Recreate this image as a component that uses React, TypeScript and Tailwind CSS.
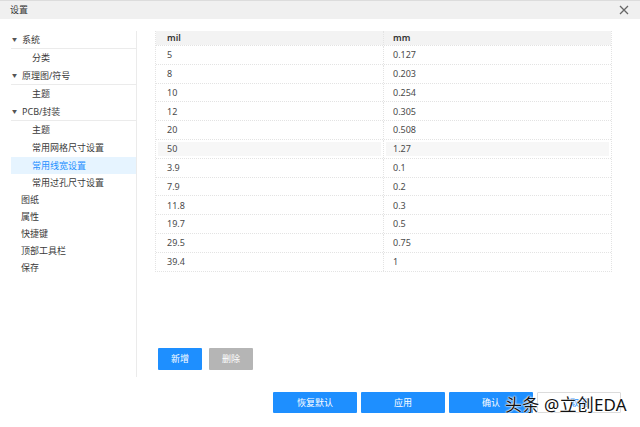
import React from 'react';

const rows = [
  ['5', '0.127'],
  ['8', '0.203'],
  ['10', '0.254'],
  ['12', '0.305'],
  ['20', '0.508'],
  ['50', '1.27'],
  ['3.9', '0.1'],
  ['7.9', '0.2'],
  ['11.8', '0.3'],
  ['19.7', '0.5'],
  ['29.5', '0.75'],
  ['39.4', '1'],
];

type TreeItem = { label: string; level: 0 | 1 | 2; h: string; active?: boolean; line?: boolean };

const tree: TreeItem[] = [
  { label: '系统', level: 0, h: 'h-[18px]', line: true },
  { label: '分类', level: 1, h: 'h-[18px]' },
  { label: '原理图/符号', level: 0, h: 'h-[18px]', line: true },
  { label: '主题', level: 1, h: 'h-[18px]' },
  { label: 'PCB/封装', level: 0, h: 'h-[18px]', line: true },
  { label: '主题', level: 1, h: 'h-[18px]' },
  { label: '常用网格尺寸设置', level: 1, h: 'h-[18px]' },
  { label: '常用线宽设置', level: 1, h: 'h-[17px]', active: true },
  { label: '常用过孔尺寸设置', level: 1, h: 'h-[17px]' },
  { label: '图纸', level: 2, h: 'h-[17px]' },
  { label: '属性', level: 2, h: 'h-[17px]' },
  { label: '快捷键', level: 2, h: 'h-[17px]' },
  { label: '顶部工具栏', level: 2, h: 'h-[17px]' },
  { label: '保存', level: 2, h: 'h-[17px]' },
];

function TreeRow({ item }: { item: TreeItem }) {
  const pad = item.level === 0 ? 'pl-[1px]' : item.level === 1 ? 'pl-[21px]' : 'pl-[10px]';
  return (
    <div
      className={`${item.h} ${pad} flex items-center ${item.line ? 'border-b border-[#ebebeb]' : ''} ${
        item.active ? 'bg-[#e6f4ff] text-[#1e8fff]' : 'text-[#3a3a3a]'
      }`}
    >
      {item.level === 0 && <span className="text-[5px] text-[#555] w-[10px] leading-none">▼</span>}
      <span>{item.label}</span>
    </div>
  );
}

export default function App() {
  return (
    <div
      className="w-[640px] h-[427px] bg-white flex flex-col relative overflow-hidden text-[9px]"
      style={{ fontFamily: '"Noto Sans", "Noto Sans CJK SC", sans-serif' }}
    >
      <div className="h-[19px] bg-[#f0f0f0] border-t border-[#dcdcdc] flex items-center justify-between pl-[10px] pr-[11px]">
        <span className="text-[#333]">设置</span>
        <svg width="10" height="10" viewBox="0 0 10 10">
          <path d="M1 1 L9 9 M9 1 L1 9" stroke="#666" strokeWidth="1.3" />
        </svg>
      </div>

      <div className="flex h-[366px]">
        <div className="w-[137px] pt-[12px] pl-[11px]">
          <div className="h-[346px] border-r border-[#ebebeb]">
            {tree.map((item, i) => (
              <TreeRow key={i} item={item} />
            ))}
          </div>
        </div>

        <div className="pl-[18px] pt-[12px] flex flex-col">
          <div className="h-[346px] flex flex-col justify-between">
            <div className="w-[457px] border-l border-r border-b border-dotted border-[#e3e3e3]">
              <div className="flex h-[14px] bg-[#f3f3f3] font-semibold text-[#333]">
                <div className="w-[228px] pl-[11px] flex items-center border-r border-dotted border-[#e3e3e3]">mil</div>
                <div className="flex-1 pl-[9px] flex items-center">mm</div>
              </div>
              {rows.map(([a, b], i) => (
                <div key={i} className="flex h-[18.8px] border-t border-dotted border-[#e3e3e3] text-[#4a4a4a]">
                  <div className="w-[228px] border-r border-dotted border-[#e3e3e3] p-[2px]">
                    <div className={`h-full pl-[9px] flex items-center ${i === 5 ? 'bg-[#f7f7f7]' : ''}`}>{a}</div>
                  </div>
                  <div className="flex-1 p-[2px]">
                    <div className={`h-full pl-[7px] flex items-center ${i === 5 ? 'bg-[#f7f7f7]' : ''}`}>{b}</div>
                  </div>
                </div>
              ))}
            </div>

            <div className="flex gap-[7px] pl-[3px] mb-[7px]">
              <button className="w-[44px] h-[22px] bg-[#1e8fff] text-white rounded-[1px]">新增</button>
              <button className="w-[44px] h-[22px] bg-[#b5b5b5] text-white rounded-[1px]">删除</button>
            </div>
          </div>
        </div>
      </div>

      <div className="flex justify-end gap-[4px] pr-[19px] pt-[7px]">
        <button className="w-[84px] h-[21px] bg-[#1e8fff] text-white rounded-[1px]">恢复默认</button>
        <button className="w-[84px] h-[21px] bg-[#1e8fff] text-white rounded-[1px]">应用</button>
        <button className="w-[84px] h-[21px] bg-[#1e8fff] text-white rounded-[1px]">确认</button>
        <button className="w-[84px] h-[21px] bg-white border border-[#dcdcdc] text-[#1e8fff] rounded-[1px]">取消</button>
      </div>

      <div
        className="absolute left-[505px] top-[396px] text-[17px] leading-none text-[#111] tracking-[0.2px]"
        style={{ textShadow: '0 0 2px #fff, 0 0 2px #fff, 0 0 1px #fff' }}
      >
        头条 @立创EDA
      </div>
    </div>
  );
}
